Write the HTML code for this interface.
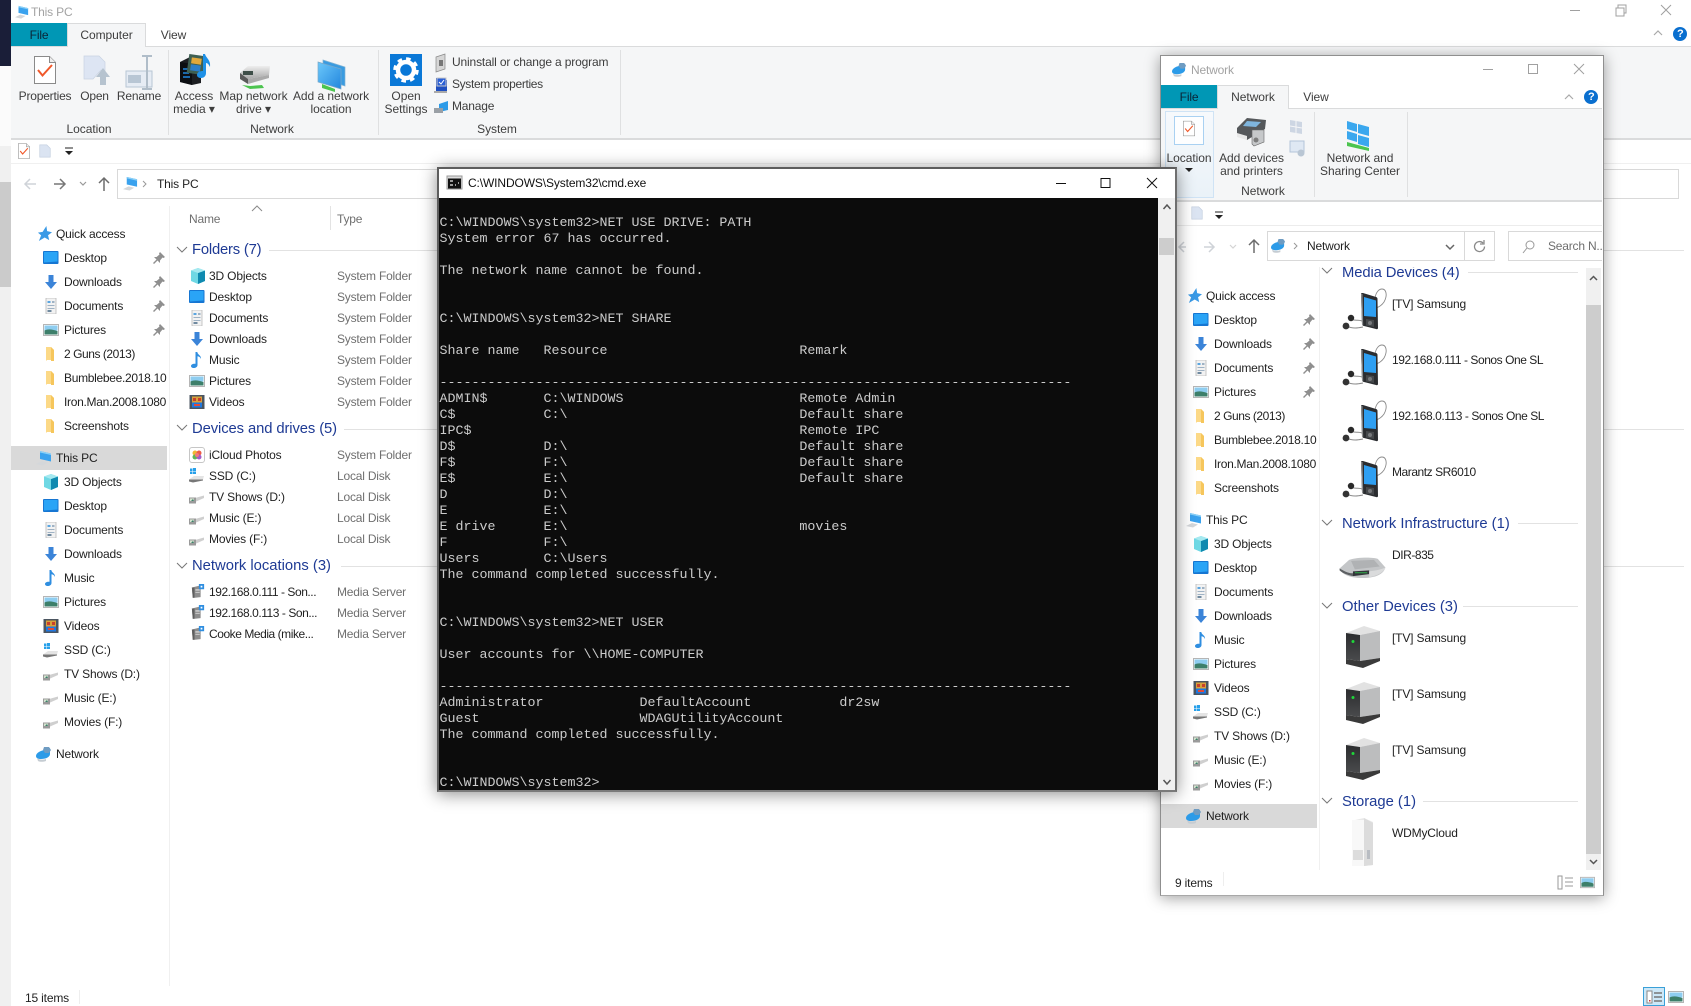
<!DOCTYPE html>
<html lang="en"><head><meta charset="utf-8"><title>This PC</title>
<style>
html,body{margin:0;padding:0;width:1691px;height:1006px;overflow:hidden;background:#fff}
body{position:relative;font-family:"Liberation Sans",sans-serif;font-size:12px;letter-spacing:-.17px;color:#1f1f1f}
.ly{position:absolute;left:0;top:0;width:1691px;height:1006px;overflow:hidden}
.r{position:absolute}
b{position:absolute;font-weight:normal;white-space:nowrap;line-height:16px}
b.c{transform:translateX(-50%)}
b.g{color:#6f6f6f;letter-spacing:-.2px}
b.n{letter-spacing:-.45px}
b.k{letter-spacing:-.3px;width:103px;overflow:hidden}
b.h{color:#1e3a94;font-size:14.8px;line-height:18px;letter-spacing:0}
b.lt{color:#8c8c8c}
b.rb{color:#3d3d3d;font-size:12px;letter-spacing:-.05px}
b.q{color:#fff;font-weight:bold;font-size:11px;letter-spacing:0}
svg.s{position:absolute;left:0;top:0;width:1691px;height:1006px;overflow:visible}
pre{position:absolute;margin:0;font-family:"Liberation Mono",monospace;font-size:13.33px;letter-spacing:0;line-height:16px;color:#ccc;white-space:pre}
</style></head><body>
<svg width="0" height="0" style="position:absolute">
<defs>
<linearGradient id="gb" x1="0" y1="0" x2="1" y2="1"><stop offset="0" stop-color="#6cc8fa"/><stop offset="1" stop-color="#2286de"/></linearGradient>
<linearGradient id="gg" x1="0" y1="0" x2="0" y2="1"><stop offset="0" stop-color="#eee"/><stop offset="1" stop-color="#a8a8a8"/></linearGradient>
<linearGradient id="gf" x1="0" y1="0" x2="0" y2="1"><stop offset="0" stop-color="#2b2c2e"/><stop offset="1" stop-color="#4a4b4d"/></linearGradient>
<symbol id="star" viewBox="0 0 16 16"><path d="M10 0l.8 5.4L16 6.6l-4.2 3.3L13 15 8.2 12.2 2 16l2.4-6L1 7l5-.8z" fill="#3a9ae6"/></symbol>
<symbol id="desk" viewBox="0 0 16 16"><rect x="0" y="1" width="15.5" height="13" rx="1" fill="#1676d2"/><path d="M1 2h13.5v9.5L1 12.5z" fill="#2aa4f6"/></symbol>
<symbol id="dl" viewBox="0 0 16 16"><path d="M5.500 1h5v7H14l-6 7-6-7h3.500z" fill="#3b84d8"/></symbol>
<symbol id="doc" viewBox="0 0 16 16"><path d="M3 0h10v16H3z" fill="#f2f2f2" stroke="#b9b9b9" stroke-width=".8"/><path d="M4.500 3h3v2h-3z" fill="#5aa5e0"/><path d="M9 3h2.500v2H9zM4.500 7h7v1h-7zM4.500 10h7v1h-7z" fill="#9fb2c4"/><path d="M4.500 12h4v2h-4z" fill="#708aa0"/></symbol>
<symbol id="pic" viewBox="0 0 16 16"><rect x=".5" y="2.500" width="15" height="11" fill="#fff" stroke="#b5b5b5"/><rect x="1.500" y="3.500" width="13" height="5" fill="#8ecdf0"/><path d="M1.500 8.500c4-2 8-1 13 .5v3.500h-13z" fill="#3d7f6a"/></symbol>
<symbol id="fold" viewBox="0 0 16 16"><path d="M3 1h5l3 3v10H4l-1 1z" fill="#fcd987"/><path d="M8 1l3 3v11H8z" fill="#f6c65c"/></symbol>
<symbol id="pc" viewBox="0 0 16 16"><path d="M4 1l11 2.500v8L4 9z" fill="#3aa2ee"/><path d="M4 1l11 2.500v1.500L4 2.500z" fill="#8ad0f7"/><path d="M0 14l6-3 6 1.500-5 3z" fill="#d4d7da"/></symbol>
<symbol id="cube" viewBox="0 0 16 16"><path d="M8 0l7 2.500v10.500L8 16 1 13V2.500z" fill="#6fd8e4"/><path d="M8 5l7-2.500v10.500L8 16z" fill="#0f8ab0"/><path d="M1 2.500L8 0l7 2.500L8 5z" fill="#a5e9f0"/></symbol>
<symbol id="mus" viewBox="0 0 16 16"><path d="M6.500 0h1.800c.3 3 4 3 3.700 7-.8-1.800-2-2.500-3.500-2.700V13c0 2-2 3-3.800 3-1.700 0-2.700-1-2.700-2 0-1.500 2-2.500 4.500-2.200z" fill="#2f8ee0"/></symbol>
<symbol id="vid" viewBox="0 0 16 16"><rect x=".5" y="1" width="15" height="14" fill="#4b5560"/><rect x="3" y="2.500" width="10" height="6" fill="#d8a13a"/><rect x="3" y="8.500" width="10" height="5" fill="#1f78e0"/><path d="M4 4h3v3H4zM9 4h3v3H9z" fill="#c8402c"/><path d="M5 10h6v2H5z" fill="#e04a3a"/></symbol>
<symbol id="ssd" viewBox="0 0 16 16"><path d="M1 1.500h2.500V4H1zM4 1h3v3H4zM1 4.500h2.500V7H1zM4 4.500h3V7H4z" fill="#27a0ea"/><path d="M0 12.500l5-3.500h10l-1 3.500-10 2.500z" fill="#e4e4e4"/><path d="M0 12.500l14 0v1l-10 2-4-1z" fill="#777"/></symbol>
<symbol id="drv" viewBox="0 0 16 16"><path d="M6 9l9-2.500v2.500L6 13z" fill="#cfcfcf"/><rect x="0" y="8.500" width="7" height="6" fill="#9a9a9a"/><path d="M1 9.500h4v2.500H1z" fill="#d5e5d0"/><path d="M2 12l2-2 1 2z" fill="#3d7f6a"/></symbol>
<symbol id="net" viewBox="0 0 16 16"><path d="M0 10c0-3 5-6 10-6l4-2v6c0 3-4 5-9 5-3 0-5-1-5-3z" fill="#2c9be8"/><path d="M8 1h5l2 3-2 3H9L7 4z" fill="#6f9cc2"/><path d="M1 12c2 2 6 2 9 1v2c-3 1-6 1-8 0z" fill="#c5ccd2"/></symbol>
<symbol id="pin" viewBox="0 0 12 12"><path d="M7 0l5 5-1.500 1-1-.5L7 8.500 7 11 4.500 8.500 1 12 0 11l3.500-3.500L1 5l2.500 0L6.500 2.500 6 1.500z" fill="#8f8f8f"/></symbol>
<symbol id="ic" viewBox="0 0 16 16"><rect x=".5" y=".5" width="15" height="15" rx="2.500" fill="#fff" stroke="#c6c6c6"/><circle cx="6" cy="6" r="2.500" fill="#f2b632"/><circle cx="10" cy="6" r="2.500" fill="#ed5b47"/><circle cx="6" cy="10" r="2.500" fill="#5fb55a"/><circle cx="10" cy="10" r="2.500" fill="#a45ac8"/><circle cx="8" cy="8" r="2" fill="#f07a7a"/></symbol>
<symbol id="ms" viewBox="0 0 16 16"><path d="M1 4l10-2.500V15l-9 1z" fill="#8d8d8d"/><path d="M1 4l3 0v11.500H2z" fill="#5f5f5f"/><path d="M5 6h5v1.500H5zM5 9h5v1H5z" fill="#d6d6d6"/><path d="M9 0h6v6H9z" fill="#2f8ee0"/><path d="M11 2h2v2h-2z" fill="#fff"/></symbol>
<symbol id="player" viewBox="0 0 60 55"><path d="M35 13c1-6 4-9 7-9 4 0 6 6 2 13-2 3-5 5-8 6" fill="none" stroke="#8b8b8b" stroke-width=".9"/><path d="M21 9c0-1 1-1 2-1l13 4c1 .3 1.500 1 1.500 2l.5 29c0 1-1 1.500-2 1l-12-3c-1 0-2-1-2-2z" fill="#2b2d30"/><path d="M21 9l1 31 1.200.4L22.500 9z" fill="#8a8c8e"/><path d="M24 12l12 3.500v16.500l-12-1z" fill="#2e9ff2"/><path d="M26 34l8 1v7l-8-1.500z" fill="#45484b"/><circle cx="30" cy="38" r="2" fill="#77797c"/><path d="M10 33c5 4 8 1 12 3M6 41c7 3 12 2 17 1" fill="none" stroke="#8b8b8b" stroke-width="1"/><circle cx="11" cy="33" r="3.200" fill="#2a2a2a"/><circle cx="6" cy="41" r="3.400" fill="#333"/></symbol>
<symbol id="rt" viewBox="0 0 48 22"><path d="M0 12L10 3c8-3 26-3 30-1l8 9c-2 7-10 11-24 11S2 18 0 12z" fill="#c4c6c8"/><path d="M12 4l24-1 6 7-26 3z" fill="#b0b2b4"/><path d="M0 12c7 4 10 5 14 5v3c-5-1-11-3-14-6z" fill="#5d6063"/><path d="M14 15l17-1v4l-17 2z" fill="#33363a"/><path d="M16 16h13v1H16z" fill="#2fb04b"/><path d="M31 15c8-1 13-2 17-4-1 4-8 9-17 10z" fill="#dadbdc"/></symbol>
<symbol id="srv" viewBox="0 0 34 42"><path d="M0 7L18 0l16 5-20 4z" fill="#e2e2e2"/><path d="M0 7l14 2v26L0 33z" fill="url(#gf)"/><path d="M14 9l20-4v27l-20 3z" fill="#bcbdbe"/><circle cx="7" cy="15.500" r="1.500" fill="#1fd63a"/><path d="M0 33l14 2 20-3v3l-17 7L0 38z" fill="#3a3a3a"/></symbol>
<symbol id="wd" viewBox="0 0 24 48"><path d="M4 2l9-2 9 4v43l-9 1-9-1z" fill="#e9e9e9"/><path d="M1 2h12v46H1z" fill="#f8f8f8"/><path d="M13 0l9 5v42l-9 1z" fill="#dcdcdc"/><path d="M2 32h10v10H2z" fill="#dcdcdc"/><path d="M16 32h3v9h-3z" fill="#b8bcc2"/></symbol>
<symbol id="chk" viewBox="0 0 22 28"><path d="M.5.5h15l6 6v21H.5z" fill="#fff" stroke="#8a8a8a"/><path d="M15.500.5v6h6" fill="#eee" stroke="#8a8a8a"/><path d="M4 14l4.500 5.500L18 9" fill="none" stroke="#f0582a" stroke-width="2"/></symbol>
<symbol id="ld" viewBox="0 0 16 16"><path d="M2 1h8l4 4v10H2z" fill="#dbe4f2" stroke="#c5d0e0" stroke-width=".8"/></symbol>
</defs></svg>

<!-- MAIN WINDOW -->
<div class="ly" style="z-index:1">
<div class="r" style="left:0;top:0;width:11px;height:1006px;background:#f0f0f0"></div>
<div class="r" style="left:0;top:66px;width:11px;height:80px;background:#fbfbfb"></div>
<div class="r" style="left:0;top:0;width:11px;height:66px;background:#1a1e38"></div>
<div class="r" style="left:0;top:182px;width:11px;height:105px;background:#cbcbcb"></div>
<div class="r" style="left:11px;top:46px;width:1680px;height:1px;background:#dadbdc"></div>
<div class="r" style="left:11px;top:47px;width:1680px;height:91px;background:#f5f6f7"></div>
<div class="r" style="left:11px;top:138px;width:1680px;height:1.500px;background:#dadbdc"></div>
<div class="r" style="left:11px;top:23px;width:56px;height:23px;background:#0097b5"></div>
<div class="r" style="left:67px;top:23px;width:79px;height:24px;background:#f5f6f7;border:1px solid #dadbdc;border-bottom:0;box-sizing:border-box"></div>
<div class="r" style="left:168px;top:50px;width:1px;height:85px;background:#dfe0e1"></div>
<div class="r" style="left:378px;top:50px;width:1px;height:85px;background:#dfe0e1"></div>
<div class="r" style="left:620px;top:50px;width:1px;height:85px;background:#dfe0e1"></div>
<div class="r" style="left:11px;top:163px;width:1680px;height:1px;background:#f0f0f0"></div>
<div class="r" style="left:117px;top:169px;width:1562px;height:30px;border:1px solid #d9d9d9;box-sizing:border-box"></div>
<div class="r" style="left:169px;top:206px;width:1px;height:780px;background:#f0f0f0"></div>
<div class="r" style="left:330px;top:206px;width:1px;height:24px;background:#e3e3e3"></div>
<div class="r" style="left:269px;top:250px;width:1415px;height:1px;background:#e2e2e2"></div>
<div class="r" style="left:344px;top:429px;width:1340px;height:1px;background:#e2e2e2"></div>
<div class="r" style="left:341px;top:566px;width:1343px;height:1px;background:#e2e2e2"></div>
<div class="r" style="left:79px;top:990px;width:1px;height:14px;background:#eee"></div>
<div class="r" style="left:1643px;top:987px;width:22px;height:19px;background:#cce8f8;border:1.500px solid #3aa0d8;box-sizing:border-box"></div>
<div class="r" style="left:11px;top:446px;width:156px;height:24px;background:#d9d9d9"></div>

<svg class="s">
<use href="#pc" x="15" y="5" width="14" height="14"/>
<use href="#chk" x="34" y="56" width="22" height="28"/>
<path d="M84 56h15l6 6v13l-4-5-8 9h-9z" fill="#dde5f3" stroke="#c8d2e2" stroke-width=".7"/>
<path d="M103 68l7 9h-4v8h-6v-8h-4z" fill="#b6c3cf"/>
<path d="M126 71h26v16h-26z" fill="#e6ecf4" stroke="#b8c6d4"/><path d="M128 75h13v8h-13z" fill="#b8c6d4"/>
<path d="M142 57h10M142 90h10M147 57v33" stroke="#b0bdc9" stroke-width="2" fill="none" transform="translate(0,-1)"/>
<!-- access media -->
<path d="M180 62l12-6 9 3v24l-9 2-12-3z" fill="#1c1e22"/><path d="M180 62l12 2v21l-12-3z" fill="#0c0e12"/>
<path d="M183 69h7M183 73h6M183 77h7" stroke="#1f86e0" stroke-width="1.500"/>
<rect x="188" y="55" width="16" height="19" fill="#3e5f52" transform="rotate(8 196 64)"/>
<rect x="191" y="58" width="10" height="6" fill="#e2a83c" transform="rotate(8 196 64)"/><rect x="191" y="65" width="10" height="6" fill="#2d7fcb" transform="rotate(8 196 64)"/>
<path d="M205 54c1 4 6 6 5 13-1-2-2-4-4-4v10c0 3-2 5-5 5-2 0-4-1-4-3 0-3 3-4 6-4v-17z" fill="#1e90e6"/>
<!-- map drive -->
<path d="M240 73l8-7 22 0-1 9-21 4z" fill="url(#gg)"/><path d="M240 73l8 6v5l-8-5z" fill="#5a5a5a"/><path d="M248 79l21-4v3l-21 6z" fill="#aaa"/><rect x="243" y="71" width="10" height="4" fill="#3e4e48"/>
<path d="M242 85l8 4 14-1-2-3-12 1z" fill="#4cc44f"/>
<!-- add network -->
<path d="M323 60l22 7v19l-22-7z" fill="#3a9be0" stroke="#7fb2d4" stroke-width=".7"/><path d="M318 62l23 7v20l-23-7z" fill="url(#gb)" stroke="#7aa9c9" stroke-width=".7"/>
<path d="M322 84l13 5v3l-13-4z" fill="#4cc44f"/>
<!-- settings -->
<rect x="390" y="54" width="32" height="32" fill="#0a78d7"/>
<circle cx="406" cy="70" r="8" fill="none" stroke="#fff" stroke-width="4.500"/><circle cx="406" cy="70" r="11" fill="none" stroke="#fff" stroke-width="3.500" stroke-dasharray="4.500 4.100"/>
<!-- small -->
<path d="M436 57l9-3v15l-9 3z" fill="#d6d6d6" stroke="#888" stroke-width=".7"/><rect x="439" y="60" width="4" height="6" fill="#777"/>
<path d="M436 78l11 2v11h-11z" fill="#1f4fc0"/><path d="M437 78h9v8h-9z" fill="#2b60d6" stroke="#c8c8c8"/><path d="M434 91h13v2h-13z" fill="#aaa"/><path d="M439 82l2 2 3-4" stroke="#fff" fill="none"/>
<path d="M439 104l9-3v9l-9 2z" fill="#2c9be8"/><path d="M434 108h9v5h-9z" fill="#9aa0a6"/>
<!-- QAT -->
<use href="#chk" x="18" y="143" width="12" height="16"/><use href="#ld" x="38" y="143" width="14" height="16"/>
<path d="M65 148h8" stroke="#222"/><path d="M65 151h8l-4 4z" fill="#222"/>
<!-- nav arrows -->
<path d="M36 184H25m5-5l-5 5 5 5" fill="none" stroke="#cfd3d8" stroke-width="1.500"/>
<path d="M54 184h11m-5-5l5 5-5 5" fill="none" stroke="#777" stroke-width="1.500"/>
<path d="M80 182l3 3 3-3" fill="none" stroke="#999" stroke-width="1.200"/>
<path d="M104 191v-13m-5 5l5-5 5 5" fill="none" stroke="#6d6d6d" stroke-width="1.500"/>
<use href="#pc" x="123" y="176" width="15" height="15"/>
<path d="M143 181l3 3-3 3" fill="none" stroke="#999"/>
<path d="M252 211l5-5 5 5" fill="none" stroke="#8a8a8a"/>
<!-- group chevrons -->
<path d="M177 247l5 5 5-5M177 425l5 5 5-5M177 563l5 5 5-5" fill="none" stroke="#777"/>
<!-- list icons -->
<use href="#cube" x="190" y="268" width="16" height="16"/><use href="#desk" x="189" y="289" width="16" height="16"/><use href="#doc" x="189" y="310" width="16" height="16"/><use href="#dl" x="189" y="331" width="16" height="16"/><use href="#mus" x="189" y="352" width="16" height="16"/><use href="#pic" x="189" y="373" width="16" height="16"/><use href="#vid" x="189" y="394" width="16" height="16"/>
<use href="#ic" x="189" y="447" width="16" height="16"/><use href="#ssd" x="189" y="467" width="16" height="16"/><use href="#drv" x="189" y="489" width="16" height="16"/><use href="#drv" x="189" y="510" width="16" height="16"/><use href="#drv" x="189" y="531" width="16" height="16"/>
<use href="#ms" x="191" y="583" width="14" height="16"/><use href="#ms" x="191" y="604" width="14" height="16"/><use href="#ms" x="191" y="625" width="14" height="16"/>
<!-- status view -->
<path d="M1647 991h5v12h-5z" fill="#fff" stroke="#888"/><path d="M1654 993h8M1654 997h8M1654 1001h8" stroke="#777" stroke-width="1.500"/><path d="M1649 1000h1.500v1.500H1649z" fill="#c33"/>
<use href="#pic" x="1668" y="989" width="16" height="16"/>
<!-- window ctrls -->
<path d="M1570 10.500h10" stroke="#a0a0a0"/><path d="M1616 8h8v8h-8zM1618 8V5h8v8h-2" fill="none" stroke="#a0a0a0"/><path d="M1661 5l10 10m0-10l-10 10" stroke="#a0a0a0"/>
<path d="M1654 35l4-4 4 4" fill="none" stroke="#a9a9a9" stroke-width="1.200"/>
<circle cx="1680" cy="34" r="7" fill="#0a6fcf"/>
</svg>
<b class="q" style="left:1677px;top:26px">?</b>
<b class="lt" style="left:31px;top:4px;color:#a3a3a3">This PC</b>
<b class="c" style="left:39px;top:27px;color:#0a2436">File</b>
<b class="rb c" style="left:106.500px;top:27px">Computer</b>
<b class="rb c" style="left:173.500px;top:27px">View</b>
<b class="rb c" style="left:45px;top:88px;letter-spacing:-.2px">Properties</b><b class="rb c lt" style="left:94.500px;top:88px;letter-spacing:-.2px">Open</b><b class="rb c lt" style="left:139px;top:88px;letter-spacing:-.2px">Rename</b>
<b class="rb c" style="left:89px;top:121px">Location</b>
<b class="rb c" style="left:194px;top:88px">Access</b><b class="rb c" style="left:194px;top:101px">media ▾</b>
<b class="rb c" style="left:253.500px;top:88px">Map network</b><b class="rb c" style="left:253.500px;top:101px">drive ▾</b>
<b class="rb c" style="left:331px;top:88px">Add a network</b><b class="rb c" style="left:331px;top:101px">location</b>
<b class="rb c" style="left:272px;top:121px">Network</b>
<b class="rb c" style="left:406px;top:88px">Open</b><b class="rb c" style="left:406px;top:101px">Settings</b>
<b class="rb" style="left:452px;top:54px;letter-spacing:-.15px">Uninstall or change a program</b>
<b class="rb" style="left:452px;top:76px;letter-spacing:-.35px">System properties</b>
<b class="rb" style="left:452px;top:98px;letter-spacing:-.2px">Manage</b>
<b class="rb c" style="left:497px;top:121px">System</b>
<b style="left:157px;top:176px">This PC</b>
<b class="g" style="left:189px;top:211px">Name</b><b class="g" style="left:337px;top:211px">Type</b>
<b class="h" style="left:192px;top:241px;letter-spacing:-.2px">Folders (7)</b>
<b class="h" style="left:192px;top:420px;letter-spacing:-.1px">Devices and drives (5)</b>
<b class="h" style="left:192px;top:557px">Network locations (3)</b>
<b style="left:209px;top:268px">3D Objects</b><b class="g" style="left:337px;top:268px">System Folder</b>
<b style="left:209px;top:289px">Desktop</b><b class="g" style="left:337px;top:289px">System Folder</b>
<b style="left:209px;top:310px">Documents</b><b class="g" style="left:337px;top:310px">System Folder</b>
<b style="left:209px;top:331px">Downloads</b><b class="g" style="left:337px;top:331px">System Folder</b>
<b style="left:209px;top:352px">Music</b><b class="g" style="left:337px;top:352px">System Folder</b>
<b style="left:209px;top:373px">Pictures</b><b class="g" style="left:337px;top:373px">System Folder</b>
<b style="left:209px;top:394px">Videos</b><b class="g" style="left:337px;top:394px">System Folder</b>
<b style="left:209px;top:447px">iCloud Photos</b><b class="g" style="left:337px;top:447px">System Folder</b>
<b style="left:209px;top:468px">SSD (C:)</b><b class="g" style="left:337px;top:468px">Local Disk</b>
<b style="left:209px;top:489px">TV Shows (D:)</b><b class="g" style="left:337px;top:489px">Local Disk</b>
<b style="left:209px;top:510px">Music (E:)</b><b class="g" style="left:337px;top:510px">Local Disk</b>
<b style="left:209px;top:531px">Movies (F:)</b><b class="g" style="left:337px;top:531px">Local Disk</b>
<b class="n" style="left:209px;top:584px">192.168.0.111 - Son...</b><b class="g" style="left:337px;top:584px">Media Server</b>
<b class="n" style="left:209px;top:605px">192.168.0.113 - Son...</b><b class="g" style="left:337px;top:605px">Media Server</b>
<b class="n" style="left:209px;top:626px">Cooke Media (mike...</b><b class="g" style="left:337px;top:626px">Media Server</b>
<b style="left:25px;top:991px;line-height:14px">15 items</b>
<!-- nav pane main -->
<svg class="s">
<use href="#star" x="37" y="226" width="15" height="15"/>
<use href="#desk" x="43" y="250" width="16" height="16"/><use href="#dl" x="43" y="274" width="16" height="16"/><use href="#doc" x="43" y="298" width="16" height="16"/><use href="#pic" x="43" y="322" width="16" height="16"/>
<use href="#fold" x="43" y="346" width="16" height="16"/><use href="#fold" x="43" y="370" width="16" height="16"/><use href="#fold" x="43" y="394" width="16" height="16"/><use href="#fold" x="43" y="418" width="16" height="16"/>
<use href="#pin" x="153" y="252" width="12" height="12"/><use href="#pin" x="153" y="276" width="12" height="12"/><use href="#pin" x="153" y="300" width="12" height="12"/><use href="#pin" x="153" y="324" width="12" height="12"/>
<use href="#pc" x="36" y="450" width="16" height="16"/>
<use href="#cube" x="43" y="474" width="16" height="16"/><use href="#desk" x="43" y="498" width="16" height="16"/><use href="#doc" x="43" y="522" width="16" height="16"/><use href="#dl" x="43" y="546" width="16" height="16"/><use href="#mus" x="43" y="570" width="16" height="16"/><use href="#pic" x="43" y="594" width="16" height="16"/><use href="#vid" x="43" y="618" width="16" height="16"/><use href="#ssd" x="43" y="642" width="16" height="16"/><use href="#drv" x="43" y="666" width="16" height="16"/><use href="#drv" x="43" y="690" width="16" height="16"/><use href="#drv" x="43" y="714" width="16" height="16"/>
<use href="#net" x="36" y="746" width="16" height="16"/>
</svg>
<b style="left:56px;top:226px">Quick access</b><b style="left:64px;top:250px">Desktop</b><b style="left:64px;top:274px">Downloads</b><b style="left:64px;top:298px">Documents</b><b style="left:64px;top:322px">Pictures</b><b class="n" style="left:64px;top:346px">2 Guns (2013)</b><b class="k" style="left:64px;top:370px">Bumblebee.2018.10</b><b class="k" style="left:64px;top:394px">Iron.Man.2008.1080</b><b style="left:64px;top:418px">Screenshots</b><b style="left:56px;top:450px">This PC</b><b style="left:64px;top:474px">3D Objects</b><b style="left:64px;top:498px">Desktop</b><b style="left:64px;top:522px">Documents</b><b style="left:64px;top:546px">Downloads</b><b style="left:64px;top:570px">Music</b><b style="left:64px;top:594px">Pictures</b><b style="left:64px;top:618px">Videos</b><b style="left:64px;top:642px">SSD (C:)</b><b style="left:64px;top:666px">TV Shows (D:)</b><b style="left:64px;top:690px">Music (E:)</b><b style="left:64px;top:714px">Movies (F:)</b><b style="left:56px;top:746px">Network</b>
</div>

<!-- NETWORK WINDOW -->
<div class="ly" style="z-index:2">
<div class="r" style="left:1159.500px;top:54.500px;width:444px;height:841px;background:#fff;border:1.500px solid #8f8f8f;border-bottom-color:#a8a8a8;box-sizing:border-box;box-shadow:0 2px 14px rgba(0,0,0,.38)"></div>
<div class="r" style="left:1161px;top:108px;width:441px;height:1px;background:#dadbdc"></div>
<div class="r" style="left:1161px;top:109px;width:441px;height:91px;background:#f5f6f7"></div>
<div class="r" style="left:1161px;top:200px;width:441px;height:1.500px;background:#dadbdc"></div>
<div class="r" style="left:1161px;top:85px;width:56px;height:23px;background:#0097b5"></div>
<div class="r" style="left:1217px;top:85px;width:72px;height:24px;background:#f5f6f7;border:1px solid #dadbdc;border-bottom:0;box-sizing:border-box"></div>
<div class="r" style="left:1165px;top:111px;width:49px;height:87px;background:linear-gradient(#f6f9fc,#eaf2f8);border:1px solid #cfe3f5;box-sizing:border-box"></div>
<div class="r" style="left:1174px;top:116px;width:30px;height:29px;background:#fdfeff;border:1px solid #a9d1f2;box-sizing:border-box"></div>
<div class="r" style="left:1314px;top:112px;width:1px;height:85px;background:#dfe0e1"></div>
<div class="r" style="left:1407px;top:112px;width:1px;height:85px;background:#dfe0e1"></div>
<div class="r" style="left:1161px;top:225px;width:441px;height:1px;background:#ececec"></div>
<div class="r" style="left:1319px;top:267px;width:1px;height:603px;background:#f0f0f0"></div>
<div class="r" style="left:1468px;top:272px;width:110px;height:1px;background:#e2e2e2"></div>
<div class="r" style="left:1518px;top:523px;width:60px;height:1px;background:#e2e2e2"></div>
<div class="r" style="left:1463px;top:606px;width:115px;height:1px;background:#e2e2e2"></div>
<div class="r" style="left:1423px;top:801px;width:155px;height:1px;background:#e2e2e2"></div>
<div class="r" style="left:1586px;top:268px;width:15px;height:602px;background:#f0f0f0"></div>
<div class="r" style="left:1586px;top:305px;width:15px;height:549px;background:#cdcdcd"></div>
<div class="r" style="left:1161px;top:804px;width:156px;height:24px;background:#d9d9d9"></div>
<div class="r" style="left:1223px;top:872px;width:1px;height:14px;background:#eee"></div>
<b class="h" style="left:1342px;top:264px;letter-spacing:-.1px">Media Devices (4)</b>
<b class="h" style="left:1342px;top:515px">Network Infrastructure (1)</b>
<b class="h" style="left:1342px;top:598px">Other Devices (3)</b>
<b class="h" style="left:1342px;top:793px">Storage (1)</b>
<div class="r" style="left:1161px;top:226px;width:425px;height:41px;background:#fff"></div>
<div class="r" style="left:1586px;top:226px;width:15px;height:41px;background:#fff"></div>
<div class="r" style="left:1267px;top:231px;width:228px;height:30px;border:1px solid #d9d9d9;box-sizing:border-box"></div>
<div class="r" style="left:1464px;top:231px;width:1px;height:30px;background:#d9d9d9"></div>
<div class="r" style="left:1508px;top:231px;width:94px;height:30px;border:1px solid #d9d9d9;border-right:0;box-sizing:border-box"></div>
<svg class="s">
<use href="#net" x="1172" y="62" width="15" height="15"/>
<path d="M1483 69.500h10" stroke="#a0a0a0"/><rect x="1528.500" y="64.500" width="9" height="9" fill="none" stroke="#a0a0a0"/><path d="M1574 64l10 10m0-10l-10 10" stroke="#a0a0a0"/>
<path d="M1565 99l4-4 4 4" fill="none" stroke="#a9a9a9" stroke-width="1.200"/>
<circle cx="1591" cy="97" r="7" fill="#0a6fcf"/>
<use href="#chk" x="1183" y="120" width="12" height="17"/>
<path d="M1185 168h8l-4 4z" fill="#222"/>
<!-- printer -->
<path d="M1237 128l10-10 19 2-1 9-18 11-10-5z" fill="#55585b"/><path d="M1247 121l14 1-5 5-13-1z" fill="#7fb5dd"/><path d="M1237 133l10 3v4l-10-3z" fill="#e8e8e8"/><path d="M1252 130h12v12l-10 4-2-2z" fill="#c6c8ca" stroke="#666" stroke-width=".6"/><circle cx="1256" cy="140" r="2.500" fill="#7d7d7d"/>
<path d="M1290 120l12 2v12l-12-2z" fill="#cdd6e3"/><path d="M1290 126l12 2" stroke="#f5f6f7"/><path d="M1296 120v14" stroke="#f5f6f7"/>
<rect x="1290" y="141" width="14" height="11" fill="#dfe8f3" stroke="#b3c4d8"/><circle cx="1301" cy="153" r="3.500" fill="#b9c6d4"/>
<!-- sharing -->
<path d="M1347 121l10 3v8l-10-3zM1358 124l11 3v9l-11-3zM1347 131l10 3v8l-10-3zM1358 135l11 3v9l-11-3z" fill="#3aa7ee"/><path d="M1347 142l22 6v3l-22-5z" fill="#4cc44f"/>
<!-- qat -->
<use href="#ld" x="1190" y="205" width="14" height="16"/>
<path d="M1215 212h8" stroke="#222"/><path d="M1215 215h8l-4 4z" fill="#222"/>
<path d="M1186 253h-7m5-5l-5 5 5 5" fill="none" stroke="#cfd3d8" stroke-width="1.500" transform="translate(0,-6)"/>
<path d="M1204 247h10m-5-5l5 5-5 5" fill="none" stroke="#cfd3d8" stroke-width="1.500"/>
<path d="M1230 245l3 3 3-3" fill="none" stroke="#d4d4d4" stroke-width="1.200"/>
<path d="M1254 253v-13m-5 5l5-5 5 5" fill="none" stroke="#6d6d6d" stroke-width="1.500"/>
<use href="#net" x="1271" y="238" width="15" height="15"/><path d="M1294 243l3 3-3 3" fill="none" stroke="#999"/>
<path d="M1446 245l4 4 4-4" fill="none" stroke="#666" stroke-width="1.500"/>
<path d="M1483 243a5 5 0 1 0 1.500 3.500M1484 240v4h-4" fill="none" stroke="#8a8a8a" stroke-width="1.300"/>
<circle cx="1530" cy="245" r="4" fill="none" stroke="#999"/><path d="M1527 248l-4 5" stroke="#999"/>
<path d="M1322 268l5 5 5-5M1322 520l5 5 5-5M1322 603l5 5 5-5M1322 798l5 5 5-5" fill="none" stroke="#777"/>
<path d="M1590 280l3.500-3.500 3.500 3.500M1590 860l3.500 3.500 3.500-3.500" fill="none" stroke="#555" stroke-width="1.500"/>
<use href="#player" x="1340" y="285" width="60" height="55"/><use href="#player" x="1340" y="341" width="60" height="55"/><use href="#player" x="1340" y="397" width="60" height="55"/><use href="#player" x="1340" y="453" width="60" height="55"/>
<use href="#rt" x="1339" y="557" width="47" height="21"/>
<use href="#srv" x="1346" y="626" width="34" height="42"/><use href="#srv" x="1346" y="682" width="34" height="42"/><use href="#srv" x="1346" y="738" width="34" height="42"/>
<use href="#wd" x="1351" y="818" width="24" height="48"/>
<path d="M1558 876h4v13h-4z" fill="#fff" stroke="#999"/><path d="M1565 878h8M1565 882h8M1565 886h8" stroke="#999"/>
<use href="#pic" x="1580" y="875" width="15" height="15"/>
<g transform="translate(1150,62)">
<use href="#star" x="37" y="226" width="15" height="15"/>
<use href="#desk" x="43" y="250" width="16" height="16"/><use href="#dl" x="43" y="274" width="16" height="16"/><use href="#doc" x="43" y="298" width="16" height="16"/><use href="#pic" x="43" y="322" width="16" height="16"/>
<use href="#fold" x="43" y="346" width="16" height="16"/><use href="#fold" x="43" y="370" width="16" height="16"/><use href="#fold" x="43" y="394" width="16" height="16"/><use href="#fold" x="43" y="418" width="16" height="16"/>
<use href="#pin" x="153" y="252" width="12" height="12"/><use href="#pin" x="153" y="276" width="12" height="12"/><use href="#pin" x="153" y="300" width="12" height="12"/><use href="#pin" x="153" y="324" width="12" height="12"/>
<use href="#pc" x="36" y="450" width="16" height="16"/>
<use href="#cube" x="43" y="474" width="16" height="16"/><use href="#desk" x="43" y="498" width="16" height="16"/><use href="#doc" x="43" y="522" width="16" height="16"/><use href="#dl" x="43" y="546" width="16" height="16"/><use href="#mus" x="43" y="570" width="16" height="16"/><use href="#pic" x="43" y="594" width="16" height="16"/><use href="#vid" x="43" y="618" width="16" height="16"/><use href="#ssd" x="43" y="642" width="16" height="16"/><use href="#drv" x="43" y="666" width="16" height="16"/><use href="#drv" x="43" y="690" width="16" height="16"/><use href="#drv" x="43" y="714" width="16" height="16"/>
<use href="#net" x="36" y="746" width="16" height="16"/>
</g>
</svg>
<b class="q" style="left:1588px;top:89px">?</b>
<b class="lt" style="left:1191px;top:62px;color:#a3a3a3">Network</b>
<b class="c" style="left:1189px;top:89px;color:#0a2436">File</b>
<b class="rb c" style="left:1253px;top:89px">Network</b><b class="rb c" style="left:1316px;top:89px">View</b>
<b class="rb c" style="left:1189px;top:150px">Location</b>
<b class="rb c" style="left:1251.500px;top:150px">Add devices</b><b class="rb c" style="left:1251.500px;top:163px">and printers</b>
<b class="rb c" style="left:1263px;top:183px">Network</b>
<b class="rb c" style="left:1360px;top:150px">Network and</b><b class="rb c" style="left:1360px;top:163px">Sharing Center</b>
<b style="left:1307px;top:238px">Network</b>
<b class="g" style="left:1548px;top:238px;width:54px;overflow:hidden">Search N..</b>
<b style="left:1392px;top:296px">[TV] Samsung</b>
<b class="n" style="left:1392px;top:352px">192.168.0.111 - Sonos One SL</b>
<b class="n" style="left:1392px;top:408px">192.168.0.113 - Sonos One SL</b>
<b class="n" style="left:1392px;top:464px">Marantz SR6010</b>
<b class="n" style="left:1392px;top:547px">DIR-835</b>
<b style="left:1392px;top:630px">[TV] Samsung</b>
<b style="left:1392px;top:686px">[TV] Samsung</b>
<b style="left:1392px;top:742px">[TV] Samsung</b>
<b style="left:1392px;top:825px">WDMyCloud</b>
<b style="left:1175px;top:875px">9 items</b>
<!-- nav pane network text -->
<div style="position:absolute;left:1150px;top:62px;width:0;height:0">
<b style="left:56px;top:226px">Quick access</b><b style="left:64px;top:250px">Desktop</b><b style="left:64px;top:274px">Downloads</b><b style="left:64px;top:298px">Documents</b><b style="left:64px;top:322px">Pictures</b><b class="n" style="left:64px;top:346px">2 Guns (2013)</b><b class="k" style="left:64px;top:370px">Bumblebee.2018.10</b><b class="k" style="left:64px;top:394px">Iron.Man.2008.1080</b><b style="left:64px;top:418px">Screenshots</b><b style="left:56px;top:450px">This PC</b><b style="left:64px;top:474px">3D Objects</b><b style="left:64px;top:498px">Desktop</b><b style="left:64px;top:522px">Documents</b><b style="left:64px;top:546px">Downloads</b><b style="left:64px;top:570px">Music</b><b style="left:64px;top:594px">Pictures</b><b style="left:64px;top:618px">Videos</b><b style="left:64px;top:642px">SSD (C:)</b><b style="left:64px;top:666px">TV Shows (D:)</b><b style="left:64px;top:690px">Music (E:)</b><b style="left:64px;top:714px">Movies (F:)</b><b style="left:56px;top:746px">Network</b>
</div>
</div>

<!-- CMD WINDOW -->
<div class="ly" style="z-index:3">
<div class="r" style="left:437px;top:167px;width:739.500px;height:624.500px;background:#f0f0f0;border:2px solid #5d5d5d;border-right-color:#6f6f6f;border-bottom-color:#7a7a7a;box-sizing:border-box;box-shadow:0 2px 16px rgba(0,0,0,.45)"></div>
<div class="r" style="left:439px;top:169px;width:735.500px;height:29px;background:#fff"></div>
<div class="r" style="left:439px;top:198px;width:719px;height:591.500px;background:#0c0c0c"></div>
<div class="r" style="left:1159px;top:238px;width:15px;height:17px;background:#cdcdcd"></div>
<svg class="s">
<rect x="447" y="176" width="15" height="13" fill="#ddd" stroke="#999"/><rect x="448" y="178.500" width="13" height="10" fill="#111"/><path d="M450 181h3M450 185h3M455 185h1M458 183h1" stroke="#eee" stroke-width="1.300"/>
<path d="M1056 183.500h10" stroke="#111"/><rect x="1101" y="178.500" width="9" height="9" fill="none" stroke="#111"/><path d="M1147 178l10 10m0-10l-10 10" stroke="#111"/>
<path d="M1163.500 209l3.500-4 3.500 4M1163.500 780l3.500 4 3.500-4" fill="none" stroke="#555" stroke-width="1.500"/>
</svg>
<b style="left:468px;top:175px;color:#111;letter-spacing:-.12px">C:\WINDOWS\System32\cmd.exe</b>
<pre style="left:439.500px;top:216px">C:\WINDOWS\system32&gt;NET USE DRIVE: PATH
System error 67 has occurred.

The network name cannot be found.


C:\WINDOWS\system32&gt;NET SHARE

Share name   Resource                        Remark

-------------------------------------------------------------------------------
ADMIN$       C:\WINDOWS                      Remote Admin
C$           C:\                             Default share
IPC$                                         Remote IPC
D$           D:\                             Default share
F$           F:\                             Default share
E$           E:\                             Default share
D            D:\
E            E:\
E drive      E:\                             movies
F            F:\
Users        C:\Users
The command completed successfully.


C:\WINDOWS\system32&gt;NET USER

User accounts for \\HOME-COMPUTER

-------------------------------------------------------------------------------
Administrator            DefaultAccount           dr2sw
Guest                    WDAGUtilityAccount
The command completed successfully.


C:\WINDOWS\system32&gt;</pre>
</div>
</body></html>
